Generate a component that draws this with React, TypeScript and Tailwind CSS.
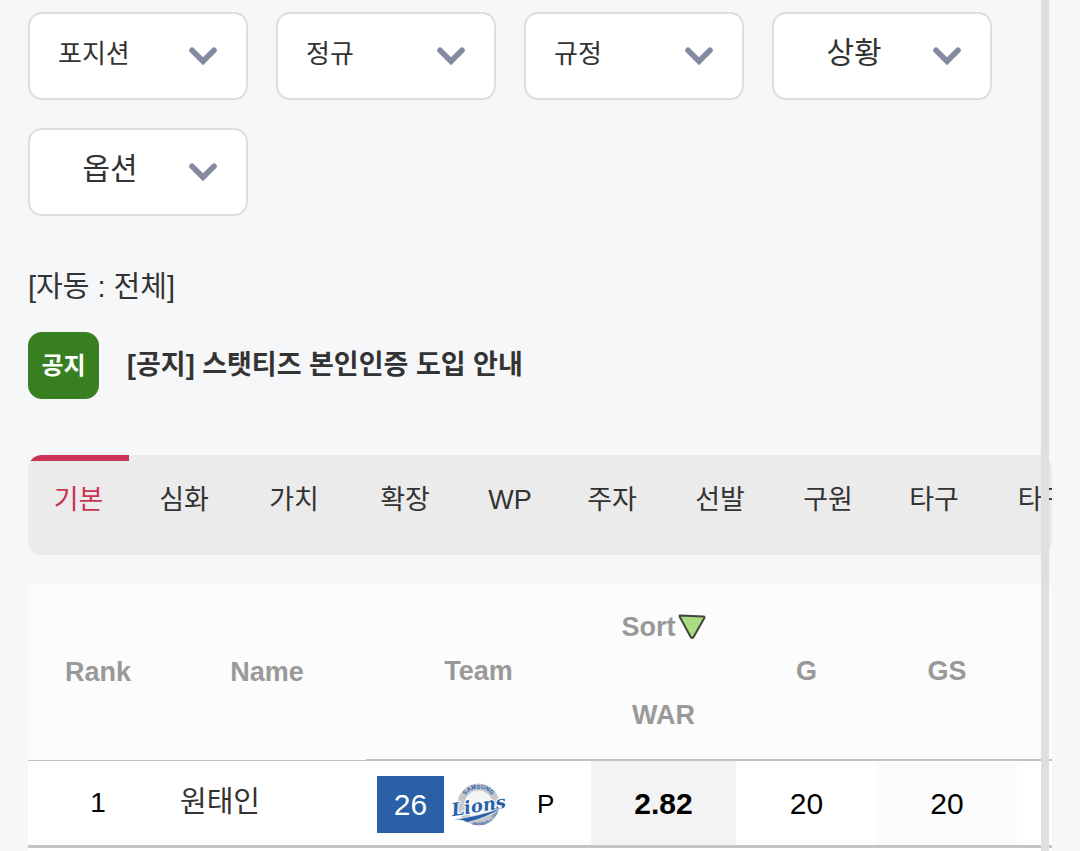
import React, { useState } from 'react';

const filters = [
  { id: 'position', label: '포지션', options: ['포지션', '투수', '포수', '내야수', '외야수'] },
  { id: 'season', label: '정규', options: ['정규', '시범', '포스트시즌'] },
  { id: 'qualified', label: '규정', options: ['규정', '전체'] },
];

const menus = ['상황', '옵션'];

const tabs = [
  { label: '기본', width: 'w-[101px]' },
  { label: '심화', width: 'w-[110px]' },
  { label: '가치', width: 'w-[110px]' },
  { label: '확장', width: 'w-[112px]' },
  { label: 'WP', width: 'w-[98px]' },
  { label: '주자', width: 'w-[106px]' },
  { label: '선발', width: 'w-[110px]' },
  { label: '구원', width: 'w-[106px]' },
  { label: '타구', width: 'w-[106px]' },
  { label: '타구2', width: 'w-[126px]' },
];

const Chevron: React.FC = () => (
  <svg
    className="pointer-events-none absolute top-8 right-7 h-5 w-[30px]"
    viewBox="0 0 30 20"
    fill="none"
    stroke="#848aa0"
    strokeWidth="5.6"
    strokeLinecap="round"
    aria-hidden="true"
  >
    <path d="M4 4.2 15 15.2 26 4.2" />
  </svg>
);

const SortArrow: React.FC = () => (
  <svg className="h-[26px] w-7" viewBox="0 0 28 26" aria-hidden="true">
    <path
      d="M2.3 1.6Q1.2 1.3 1.7 2.8L12.8 23.2Q14.2 24.9 15.4 23.2L26.2 4.2Q27 2.6 25.6 2.5Z"
      fill="#a8dc80"
      stroke="#44443c"
      strokeWidth="2"
      strokeLinejoin="round"
    />
  </svg>
);

const LionsLogo: React.FC = () => (
  <svg className="h-[46px] w-[60px] overflow-visible" viewBox="0 0 60 46" role="img" aria-label="Samsung Lions">
    <defs>
      <path id="ring-top" d="M13.5 23.5A16 16 0 0 1 45.5 23.5" />
      <path id="ring-bottom" d="M12 34A20 20 0 0 0 49.5 25" />
    </defs>
    <circle cx="29.5" cy="23.5" r="17.5" fill="#f4f5f6" stroke="#c5c7ca" strokeWidth="7" />
    <text fontFamily="Liberation Sans" fontSize="6" fontWeight="700" fill="#2a60a8">
      <textPath href="#ring-top" startOffset="50%" textAnchor="middle">SAMSUNG</textPath>
    </text>
    <text fontFamily="Liberation Sans" fontSize="4" fontWeight="700" fill="#2a60a8">
      <textPath href="#ring-bottom" startOffset="62%" textAnchor="middle">BASEBALL CLUB</textPath>
    </text>
    <text
      x="2"
      y="31"
      fontFamily="DejaVu Serif"
      fontSize="18"
      fontWeight="700"
      fontStyle="italic"
      fill="#2a60a8"
      stroke="#fff"
      strokeWidth="2"
      paintOrder="stroke"
      transform="rotate(-9 29 23)"
    >
      Lions
    </text>
    <path d="M2 38.5Q28 36 53 26.5Q38 37 18 41.5Q13 38 2 38.5Z" fill="#2a60a8" stroke="#fff" strokeWidth="0.6" />
  </svg>
);

export default function App() {
  const [activeTab, setActiveTab] = useState('기본');

  return (
    <div className="relative flex h-screen flex-col overflow-hidden bg-[#f6f7f9] px-7 pt-3 font-['Liberation_Sans','Noto_Sans_CJK_KR',sans-serif] text-[#333]">
      {/* Filters */}
      <div className="flex flex-wrap gap-7">
        {filters.map((filter) => (
          <div
            key={filter.id}
            className="relative h-[88px] w-[220px] rounded-[14px] border-2 border-[#dedede] bg-white"
          >
            <select
              aria-label={filter.label}
              className="h-full w-full appearance-none rounded-[14px] bg-transparent pb-1 pl-7 text-[26px]"
            >
              {filter.options.map((option) => (
                <option key={option}>{option}</option>
              ))}
            </select>
            <Chevron />
          </div>
        ))}
        {menus.map((menu) => (
          <button
            key={menu}
            type="button"
            className="relative h-[88px] w-[220px] rounded-[14px] border-2 border-[#dedede] bg-white pr-14 pb-2 text-[30px]"
          >
            {menu}
            <Chevron />
          </button>
        ))}
      </div>

      <p className="mt-[51px] text-[29px] leading-10">[자동 : 전체]</p>

      {/* Notice */}
      <div className="mt-[25px] flex items-center gap-7">
        <span className="flex h-[67px] w-[71px] items-center justify-center rounded-[14px] bg-[#387f22] text-[24px] font-bold text-white">
          공지
        </span>
        <a href="#notice" className="text-[27px] font-bold">[공지] 스탯티즈 본인인증 도입 안내</a>
      </div>

      {/* Record tabs */}
      <nav className="mt-14 flex h-[100px] shrink-0 overflow-hidden rounded-[14px] bg-[#ebebeb]">
        {tabs.map((tab) => (
          <button
            key={tab.label}
            type="button"
            onClick={() => setActiveTab(tab.label)}
            className={`${tab.width} shrink-0 border-t-[6px] pb-4 text-[27px] whitespace-nowrap ${
              activeTab === tab.label ? 'border-[#cb3355] text-[#cb3355]' : 'border-transparent'
            }`}
          >
            {tab.label}
          </button>
        ))}
      </nav>

      {/* Player table */}
      <div className="mt-7 flex-1 overflow-hidden rounded-t-[14px] bg-white">
        <table className="w-[1130px] table-fixed border-separate border-spacing-0 text-center">
          <colgroup>
            <col className="w-[140px]" />
            <col className="w-[198px]" />
            <col className="w-[225px]" />
            <col className="w-[145px]" />
            <col className="w-[141px]" />
            <col className="w-[140px]" />
            <col />
          </colgroup>
          <thead className="bg-[#fcfcfc] text-[27px] leading-[88px] text-[#999]">
            <tr>
              <th className="border-b border-[#c4c4c4]">Rank</th>
              <th className="border-b border-[#c4c4c4]">Name</th>
              <th className="border-b-2 border-[#c4c4c4]">Team</th>
              <th className="border-b-2 border-[#c4c4c4]">
                <span className="flex items-center justify-center gap-0.5">
                  Sort
                  <SortArrow />
                </span>
                WAR
              </th>
              <th className="border-b-2 border-[#c4c4c4]">G</th>
              <th className="border-b-2 border-[#c4c4c4]">GS</th>
              <td className="border-b-2 border-[#c4c4c4]" />
            </tr>
          </thead>
          <tbody className="text-[30px] text-black">
            <tr className="h-[87px]">
              <td className="border-b-3 border-[#c4c4c4] text-[28px]">1</td>
              <td className="border-b-3 border-[#c4c4c4] pl-3 text-left text-[29px] text-[#333]">
                <a href="#player">원태인</a>
              </td>
              <td className="border-b-3 border-[#c4c4c4] pt-0.5 pl-[11px]">
                <div className="flex items-center">
                  <span className="flex h-[57px] w-[67px] items-center justify-center bg-[#2a60a8] text-white">26</span>
                  <span className="ml-[5px]">
                    <LionsLogo />
                  </span>
                  <span className="ml-7 text-[26px]">P</span>
                </div>
              </td>
              <td className="border-b-3 border-[#c4c4c4] bg-[#f3f3f3] font-bold">2.82</td>
              <td className="border-b-3 border-[#c4c4c4]">20</td>
              <td className="border-b-3 border-[#c4c4c4] bg-[#fbfbfb]">20</td>
              <td className="border-b-3 border-[#c4c4c4]" />
            </tr>
          </tbody>
        </table>
      </div>

      {/* Scroll track */}
      <div className="absolute inset-y-0 right-[31px] w-2 bg-[#dedfe1]" />
    </div>
  );
}
